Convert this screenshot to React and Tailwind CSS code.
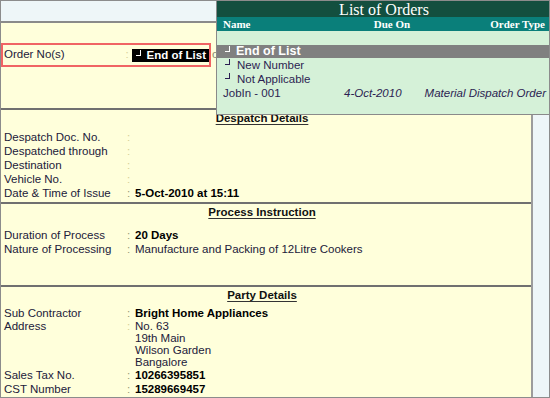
import React from "react";

const Row = ({ label, value, bold, dim }) => (
  <div className="flex h-[14px] leading-[14px] pl-[3px]">
    <div className="w-[123px] text-[#22203a]">{label}</div>
    <div className={`w-[8px] ${dim ? "text-[#d6cf98]" : "text-[#9a9878]"}`}>:</div>
    <div className={bold ? "font-bold text-black" : "text-[#22203a]"}>{value}</div>
  </div>
);

const Heading = ({ children }) => (
  <div className="mt-[1px] h-[14px] leading-[14px] text-center pr-[8px]">
    <span className="font-bold text-[#111] underline decoration-[#333] underline-offset-[2px]">{children}</span>
  </div>
);

const Corner = ({ className }) => (
  <span className={`inline-block shrink-0 w-[5px] h-[6px] border-r-[1.5px] border-b-[1.5px] ${className}`} />
);

const OrdersPopup = () => (
  <div className="absolute left-[215px] top-0 w-[335px] h-[114px] border-l border-b border-[#8a8a8a] bg-[#d5f1d8] flex flex-col">
    <div className="h-[16px] bg-[#134f3f] text-white text-[16px] leading-[17px] text-center font-['Liberation_Serif',serif]">
      List of Orders
    </div>
    <div className="h-[14px] bg-[#0a7f7a] text-white text-[11px] leading-[14px] font-bold font-['Liberation_Serif',serif] flex px-[6px]">
      <span className="w-[100px]">Name</span>
      <span className="flex-1 text-center pl-[16px]">Due On</span>
      <span className="w-[100px] text-right">Order Type</span>
    </div>
    <div className="h-[14px]" />
    <div className="h-[13px] bg-[#808080] text-white text-[12.5px] font-bold leading-[13px] flex items-center pl-[8px] whitespace-nowrap">
      <Corner className="border-white mr-[6px] -mt-[5px]" />
      End of List
    </div>
    <div className="text-[#2c1e52] whitespace-nowrap">
      <div className="h-[14px] leading-[14px] flex items-center pl-[8px]">
        <Corner className="border-[#2c1e52] mr-[7px] -mt-[6px]" />
        New Number
      </div>
      <div className="h-[14px] leading-[14px] flex items-center pl-[8px]">
        <Corner className="border-[#2c1e52] mr-[7px] -mt-[6px]" />
        Not Applicable
      </div>
      <div className="h-[14px] leading-[14px] flex pl-[6px] pr-[5px]">
        <span className="w-[121px]">JobIn - 001</span>
        <span className="italic">4-Oct-2010</span>
        <span className="italic ml-auto">Material Dispatch Order</span>
      </div>
    </div>
  </div>
);

export default function App() {
  return (
    <div className="relative w-[550px] h-[398px] overflow-hidden border border-[#8c8c8c] flex flex-col bg-[#eef6f8] font-['Liberation_Sans',Arial,sans-serif] text-[11.5px]">
      <div className="h-[22px] shrink-0 bg-[#eef6f8] border-b-2 border-[#8a8a8a]" />
      <div className="flex flex-1">
        <div className="w-[532px] bg-[#ffffdb] border-r-2 border-[#9c9c9c] flex flex-col">
          <div className="h-[85px] shrink-0">
            <div className="mt-[20px] h-[24px] w-[210px] border-2 border-[#f06464] flex items-center relative whitespace-nowrap">
              <div className="w-[123px] pl-[1px] text-[#22203a]">Order No(s)</div>
              <div className="w-[6px] text-[#d6cf98]">:</div>
              <div className="h-[13px] bg-black text-white font-bold leading-[13px] flex items-center pl-[4px] pr-[3px]">
                <Corner className="border-white mr-[6px] -mt-[5px]" />
                End of List
              </div>
              <span className="absolute left-[209px] text-[#8a8a70]">c</span>
            </div>
          </div>

          <div className="h-[94px] shrink-0 border-t-2 border-[#707070]">
            <Heading>Despatch Details</Heading>
            <div className="mt-[5px]">
              <Row label="Despatch Doc. No." dim />
              <Row label="Despatched through" dim />
              <Row label="Destination" dim />
              <Row label="Vehicle No." dim />
              <Row label="Date & Time of Issue" value="5-Oct-2010 at 15:11" bold />
            </div>
          </div>

          <div className="h-[83px] shrink-0 border-t-2 border-[#707070]">
            <Heading>Process Instruction</Heading>
            <div className="mt-[9px]">
              <Row label="Duration of Process" value="20 Days" bold />
              <Row label="Nature of Processing" value="Manufacture and Packing of 12Litre Cookers" />
            </div>
          </div>

          <div className="flex-1 border-t-2 border-[#707070]">
            <Heading>Party Details</Heading>
            <div className="mt-[4px]">
              <Row label="Sub Contractor" value="Bright Home Appliances" bold />
              <div className="flex pl-[3px] leading-[12px] text-[#22203a]">
                <div className="w-[123px]">Address</div>
                <div className="w-[8px] text-[#d6cf98]">:</div>
                <div>
                  <div>No. 63</div>
                  <div>19th Main</div>
                  <div>Wilson Garden</div>
                  <div>Bangalore</div>
                </div>
              </div>
              <Row label="Sales Tax No." value="10266395851" bold />
              <Row label="CST Number" value="15289669457" bold />
            </div>
          </div>
        </div>
        <div className="flex-1 bg-[#eef6f8]" />
      </div>
      <OrdersPopup />
    </div>
  );
}
